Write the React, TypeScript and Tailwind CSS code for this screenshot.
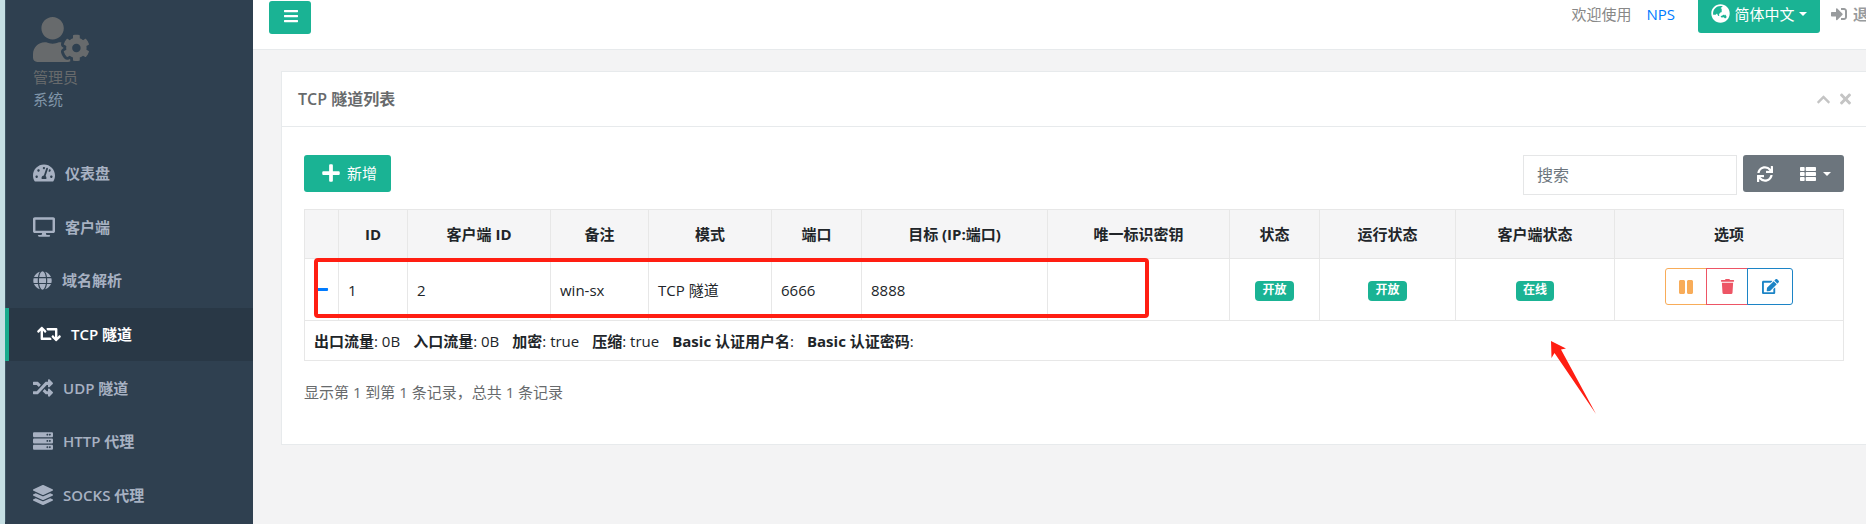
import type { ReactNode } from "react";
import type { IconType } from "react-icons";
import {
  FaBars,
  FaChevronUp,
  FaDesktop,
  FaEdit,
  FaGlobe,
  FaGlobeAsia,
  FaLayerGroup,
  FaMinus,
  FaPause,
  FaPlus,
  FaRandom,
  FaRetweet,
  FaServer,
  FaSignInAlt,
  FaSync,
  FaTachometerAlt,
  FaThList,
  FaTimes,
  FaTrash,
  FaUserCog,
} from "react-icons/fa";

type MenuItem = { label: string; icon: IconType; active?: boolean; box: string };

const menu: MenuItem[] = [
  { label: "仪表盘", icon: FaTachometerAlt, box: "size-[22px]" },
  { label: "客户端", icon: FaDesktop, box: "size-[22px]" },
  { label: "域名解析", icon: FaGlobe, box: "size-[19px]" },
  { label: "TCP 隧道", icon: FaRetweet, active: true, box: "size-6" },
  { label: "UDP 隧道", icon: FaRandom, box: "size-5" },
  { label: "HTTP 代理", icon: FaServer, box: "size-5" },
  { label: "SOCKS 代理", icon: FaLayerGroup, box: "size-5" },
];

const columns = [
  { label: "", width: "w-[34px]" },
  { label: "ID", width: "w-[69px]" },
  { label: "客户端 ID", width: "w-[143px]" },
  { label: "备注", width: "w-[98px]" },
  { label: "模式", width: "w-[123px]" },
  { label: "端口", width: "w-[90px]" },
  { label: "目标 (IP:端口)", width: "w-[186px]" },
  { label: "唯一标识密钥", width: "w-[182px]" },
  { label: "状态", width: "w-[90px]" },
  { label: "运行状态", width: "w-[136px]" },
  { label: "客户端状态", width: "w-[159px]" },
  { label: "选项", width: "w-[229px]" },
];

const details = [
  { name: "出口流量", value: "0B" },
  { name: "入口流量", value: "0B" },
  { name: "加密", value: "true" },
  { name: "压缩", value: "true" },
  { name: "Basic 认证用户名", value: "" },
  { name: "Basic 认证密码", value: "" },
];

function Caret() {
  return (
    <svg viewBox="0 0 8 4" className="h-1 w-2" fill="currentColor" aria-hidden="true">
      <path d="M0 0h8L4 4z" />
    </svg>
  );
}

function Badge({ children }: { children: ReactNode }) {
  return (
    <span className="inline-block rounded bg-[#1ab394] px-[7px] pb-[3px] align-middle text-xs leading-[17px] font-bold text-white">
      {children}
    </span>
  );
}

function Sidebar() {
  return (
    <aside className="w-[253px] shrink-0 border-l-[5px] border-[#c5dfe3] bg-[#2f4050]">
      <div className="flex h-[147px] flex-col items-start border-l border-[#3f5664] pt-[13px] pl-[27px] leading-[22px]">
        <FaUserCog className="h-[53px] w-14 text-[#676a6c]" />
        <span className="text-[#676a6c]">管理员</span>
        <span className="text-[#8095a8]">系统</span>
      </div>
      <nav className="grid h-[375px] auto-rows-fr">
        {menu.map(({ label, icon: Icon, active, box }) => (
          <a
            key={label}
            href="#"
            className={
              active
                ? "flex items-center gap-[10px] border-l-4 border-[#19aa8d] bg-[#293846] pb-px pl-7 font-semibold text-white"
                : "flex items-center gap-[10px] border-l border-[#3f5664] pb-px pl-[27px] font-semibold text-[#a7b1c2]"
            }
          >
            <Icon className={"shrink-0 " + box} />
            {label}
          </a>
        ))}
      </nav>
    </aside>
  );
}

function TopBar() {
  return (
    <header className="flex h-[50px] items-start justify-between border-b border-[#e7eaec] bg-white pl-4">
      <button
        type="button"
        aria-label="菜单"
        className="mt-px flex h-[33px] w-[42px] items-center justify-center rounded-[3px] bg-[#1ab394] pb-[3px] pl-px text-white"
      >
        <FaBars className="size-4" />
      </button>
      <div className="flex items-start whitespace-nowrap">
        <span className="mr-[15px] leading-7 text-[#888888]">欢迎使用</span>
        <a href="#" className="mr-[23px] leading-7 text-[#007bff]">
          NPS
        </a>
        <button
          type="button"
          className="mr-[11px] flex h-[33px] w-[122px] items-center justify-center gap-1 rounded-b-[3px] bg-[#1ab394] pb-[6px] text-white"
        >
          <FaGlobeAsia className="size-[19px]" />
          简体中文
          <Caret />
        </button>
        <a href="#" className="flex w-[35px] items-center gap-[6px] overflow-hidden leading-7 text-[#999c9e]">
          <FaSignInAlt className="size-4 shrink-0" />
          <span className="font-semibold">退出</span>
        </a>
      </div>
    </header>
  );
}

function TunnelTable() {
  const cell = "border border-[#e7e7e7] px-[9px]";
  const action = "flex h-[37px] items-center justify-center border";
  return (
    <div className="relative mt-[14px]">
      <table className="w-full table-fixed border-collapse text-[#212529]">
        <thead>
          <tr className="h-[49px] bg-[#f5f5f6]">
            {columns.map((c, i) => (
              <th key={i} className={"border border-[#e7e7e7] text-center font-bold " + c.width}>
                {c.label}
              </th>
            ))}
          </tr>
        </thead>
        <tbody>
          <tr className="h-[62px]">
            <td className={cell}>
              <a href="#" aria-label="收起" className="block text-[#007bff]">
                <FaMinus className="size-[15px]" />
              </a>
            </td>
            <td className={cell}>1</td>
            <td className={cell}>2</td>
            <td className={cell}>win-sx</td>
            <td className={cell}>TCP 隧道</td>
            <td className={cell}>6666</td>
            <td className={cell}>8888</td>
            <td className={cell}></td>
            <td className={cell + " text-center"}>
              <Badge>开放</Badge>
            </td>
            <td className={cell + " text-center"}>
              <Badge>开放</Badge>
            </td>
            <td className={cell + " text-center"}>
              <Badge>在线</Badge>
            </td>
            <td className={cell}>
              <div className="flex justify-center pb-[6px]">
                <button type="button" aria-label="暂停" className={action + " w-[42px] rounded-l-[3px] border-[#f8ac59] text-[#f8ac59]"}>
                  <FaPause className="size-4" />
                </button>
                <button type="button" aria-label="删除" className={action + " -ml-px w-[42px] border-[#ed5565] text-[#ed5565]"}>
                  <FaTrash className="size-[15px]" />
                </button>
                <button type="button" aria-label="编辑" className={action + " -ml-px w-[46px] rounded-r-[3px] border-[#1c84c6] text-[#1c84c6]"}>
                  <FaEdit className="size-[17px]" />
                </button>
              </div>
            </td>
          </tr>
          <tr className="h-10">
            <td colSpan={12} className={cell}>
              <div className="flex gap-[13px]">
                {details.map((d) => (
                  <span key={d.name}>
                    <b>{d.name}</b>: {d.value}
                  </span>
                ))}
              </div>
            </td>
          </tr>
        </tbody>
      </table>
      <div className="pointer-events-none absolute top-[49px] left-[10px] h-[60px] w-[835px] rounded border-4 border-[#ff1e12]" />
      <svg
        viewBox="0 0 45 73"
        className="pointer-events-none absolute top-[132px] right-[248px] h-[73px] w-[45px]"
        fill="#ff1e12"
        aria-hidden="true"
      >
        <path d="M0 0 15 7.500 10 8.500 45 73 3.500 12 .5 17z" />
      </svg>
    </div>
  );
}

export default function App() {
  return (
    <div className="flex min-h-screen overflow-hidden bg-[#f3f3f4] font-['Open_Sans','Noto_Sans_CJK_SC',sans-serif] text-[15px] leading-[22px] text-[#676a6c]">
      <Sidebar />
      <div className="min-w-0 flex-1">
        <TopBar />
        <main className="mt-[21px] ml-7 border-y border-l border-[#e7eaec] bg-white">
          <div className="flex h-[55px] items-center justify-between border-b border-[#e7eaec] pr-[15px] pl-4">
            <h5 className="text-base font-semibold">TCP 隧道列表</h5>
            <div className="flex items-center gap-[9px] text-[#c4c4c4]">
              <button type="button" aria-label="折叠">
                <FaChevronUp className="size-[15px]" />
              </button>
              <button type="button" aria-label="关闭">
                <FaTimes className="h-4 w-[11px]" />
              </button>
            </div>
          </div>
          <div className="pt-7 pr-[22px] pb-[41px] pl-[22px]">
            <div className="flex items-start justify-between">
              <button type="button" className="flex h-[37px] items-center gap-[6px] rounded-[3px] bg-[#1ab394] pr-[14px] pb-px pl-[17px] text-white">
                <FaPlus className="size-5" />
                新增
              </button>
              <div className="flex items-start gap-[6px]">
                <input
                  type="search"
                  aria-label="搜索"
                  placeholder="搜索"
                  className="h-10 w-[214px] border border-[#e5e6e7] px-[13px] text-base placeholder:text-[#6c757d]"
                />
                <div className="flex h-[37px] rounded-[3px] bg-[#6c757d] text-white">
                  <button type="button" aria-label="刷新" className="flex w-11 items-center justify-center">
                    <FaSync className="size-4" />
                  </button>
                  <button type="button" aria-label="列" className="flex w-[57px] items-center justify-center gap-[7px]">
                    <FaThList className="size-4" />
                    <Caret />
                  </button>
                </div>
              </div>
            </div>
            <TunnelTable />
            <p className="mt-5">显示第 1 到第 1 条记录，总共 1 条记录</p>
          </div>
        </main>
      </div>
    </div>
  );
}
